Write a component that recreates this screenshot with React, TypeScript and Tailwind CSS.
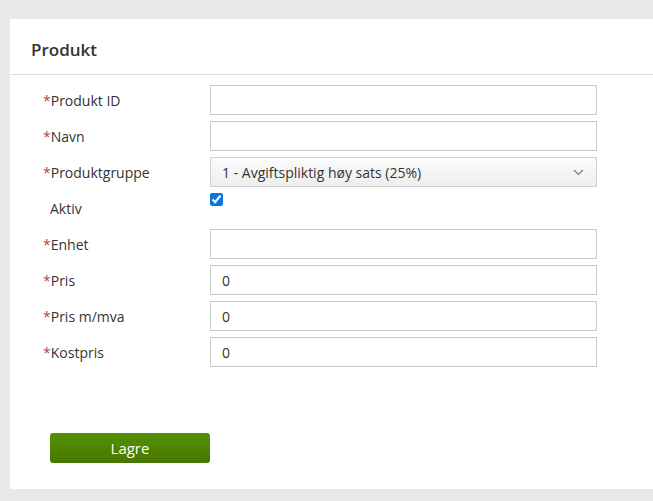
import React from "react";

const Req = () => <span className="text-[#b5484a]">*</span>;

function Row({ label, req = true, children }: { label: string; req?: boolean; children: React.ReactNode }) {
  return (
    <div className="flex items-center h-[30px] mb-[6px]">
      <label className="w-[167px] text-[14px] text-[#333]">
        {req ? <Req /> : null}
        {label}
      </label>
      {children}
    </div>
  );
}

const Input = ({ value = "" }: { value?: string }) => (
  <input
    defaultValue={value}
    className="w-[387px] h-[30px] border border-[#c8c8c8] bg-white px-[11px] text-[14px] text-[#333] outline-none"
  />
);

export default function App() {
  return (
    <div className="w-[653px] h-[501px] bg-[#e9e9e9] pt-[19px] pl-[10px] overflow-hidden" style={{ fontFamily: '"Open Sans", sans-serif' }}>
      <div className="w-[700px] h-[470px] bg-white">
        <div className="h-[56px] border-b border-[#dcdcdc] flex items-center pl-[21px]">
          <h2 className="text-[17px] font-semibold text-[#333] mt-[7px]">Produkt</h2>
        </div>
        <div className="pl-[33px] pt-[10px]">
          <Row label="Produkt ID"><Input /></Row>
          <Row label="Navn"><Input /></Row>
          <Row label="Produktgruppe">
            <div className="w-[387px] h-[30px] border border-[#d0d0d0] bg-gradient-to-b from-[#fbfbfb] to-[#eeeeee] flex items-center justify-between pl-[11px] pr-[12px] text-[14px] text-[#333]">
              <span>1 - Avgiftspliktig høy sats (25%)</span>
              <svg width="11" height="7" viewBox="0 0 11 7"><path d="M1 1l4.5 4.5L10 1" fill="none" stroke="#777" strokeWidth="1.1" /></svg>
            </div>
          </Row>
          <div className="flex h-[30px] mb-[6px]">
            <label className="w-[167px] text-[14px] text-[#333] pl-[7px] pt-[5px]">Aktiv</label>
            <input type="checkbox" defaultChecked className="w-[13px] h-[13px] mt-0 accent-[#0b75e0]" />
          </div>
          <Row label="Enhet"><Input /></Row>
          <Row label="Pris"><Input value="0" /></Row>
          <Row label="Pris m/mva"><Input value="0" /></Row>
          <Row label="Kostpris"><Input value="0" /></Row>
          <div className="pt-[60px] pl-[7px]">
            <button className="w-[160px] h-[30px] rounded-[3px] bg-gradient-to-b from-[#559100] to-[#477600] text-white text-[15px] font-normal">Lagre</button>
          </div>
        </div>
      </div>
    </div>
  );
}
